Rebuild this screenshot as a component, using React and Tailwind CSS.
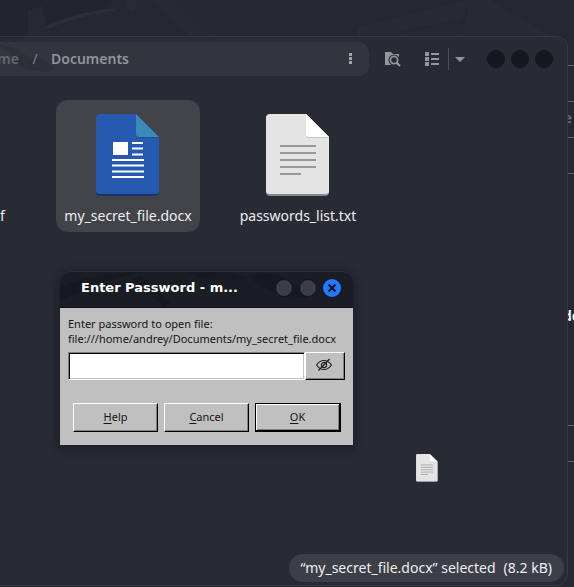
import React from 'react';

const Wallpaper = () => (
  <svg className="absolute inset-0 h-full w-full" viewBox="0 0 574 587" preserveAspectRatio="xMinYMin slice" aria-hidden="true">
    <path d="M0 0H112L106 8L60 20L44 26L36 36H0Z" fill="#23252e" />
    <path d="M28 10L42 6L48 36H28Z" fill="#282a33" />
    <path d="M46 26Q82 10 118 8L116 11Q80 15 47 29Z" fill="#2d2f38" />
    <path d="M126 0H137L134 12L124 8Z" fill="#2a2c35" />
    <path d="M150 0H180L216 36H190Z" fill="#272a34" />
    <path d="M358 28L470 0L462 18L380 36H358Z" fill="#282b35" />
    <path d="M395 36L463 18L462 36Z" fill="#262832" />
    <path d="M470 0H490L550 36H462Z" fill="#282a34" />
  </svg>
);

const DocxIcon = () => (
  <svg width="64" height="82" viewBox="0 0 64 82" aria-hidden="true">
    <path d="M4 1H41L63 23V78Q63 82 59 82H4Q0 82 0 78V4Q0 1 4 1Z" fill="#1b3566" />
    <path d="M4 0H40L63 23V77Q63 80 60 80H4Q0 80 0 77V4Q0 0 4 0Z" fill="#255ab0" />
    <path d="M40 1L63 24H43Q40 24 40 21Z" fill="#1f4d98" />
    <path d="M40 0L63 23H43Q40 23 40 20Z" fill="#3b8ab8" />
    <rect x="17" y="28" width="15" height="13" fill="#fff" />
    <path d="M36 29H47M36 34.5H47M36 40.5H47M16 46H48M16 51.5H48M16 57.5H48M16 63H48" stroke="#fff" strokeWidth="2" />
  </svg>
);

const TextIcon = ({ className }) => (
  <svg className={className} viewBox="0 0 64 82" aria-hidden="true">
    <path d="M4 1H41L63 23V78Q63 82 59 82H4Q0 82 0 78V4Q0 1 4 1Z" fill="#85878c" />
    <path d="M4 0H40L63 23V77Q63 80 60 80H4Q0 80 0 77V4Q0 0 4 0Z" fill="#e4e4e4" />
    <path d="M40 2L62 24H43Q40 24 40 21Z" fill="#c4c4c4" />
    <path d="M40 0L63 23H43Q40 23 40 20Z" fill="#fff" />
    <path d="M14 32H50M14 39H50M14 46H50M14 53H50M14 60H35" stroke="#999" strokeWidth="2" />
  </svg>
);

const FolderSearchIcon = () => (
  <svg width="16" height="16" viewBox="0 0 16 16" aria-hidden="true">
    <path d="M0 1H6L8 3H14V14H0Z" fill="#96979b" />
    <circle cx="9" cy="9" r="3.6" fill="#96979b" stroke="#282a34" strokeWidth="4" />
    <circle cx="9" cy="9" r="3.6" fill="#282a34" stroke="#96979b" strokeWidth="1.7" />
    <path d="M11.5 11.5L15 15" stroke="#96979b" strokeWidth="2.2" />
  </svg>
);

const ListIcon = () => (
  <svg width="14" height="14" viewBox="0 0 14 14" fill="#96979b" aria-hidden="true">
    <path d="M0 0H4V4H0ZM0 5H4V9H0ZM0 10H4V14H0ZM6 1H14V3H6ZM6 6H14V8H6ZM6 11H14V13H6Z" />
  </svg>
);

const EyeOffIcon = () => (
  <svg width="16" height="14" viewBox="0 0 16 14" fill="none" stroke="#222" aria-hidden="true">
    <path d="M0.5 7Q3.5 2.5 8 2.5T15.5 7Q12.5 11.5 8 11.5T0.5 7Z" strokeWidth="1.2" />
    <circle cx="8" cy="7" r="2.6" strokeWidth="1.2" />
    <path d="M2.5 12.5L13.5 1" strokeWidth="1.3" />
  </svg>
);

const FileTile = ({ name, selected, children }) => (
  <button
    className={`flex h-[132px] w-36 flex-col items-center rounded-xl pt-[14px] text-[14px] leading-5 text-[#eeeeef] ${selected ? 'bg-[#42444a]' : ''}`}
  >
    {children}
    <span className="mt-[10px]">{name}</span>
  </button>
);

const DialogButton = ({ hotkey, rest, primary }) => (
  <button
    className={`h-[29px] flex-1 text-[11px] ${
      primary
        ? 'border-r-2 border-b-2 border-t border-l border-black shadow-[inset_1px_1px_#fff,inset_-1px_-1px_#808080]'
        : 'border border-t-white border-l-white border-r-black border-b-black shadow-[inset_-1px_-1px_#808080]'
    }`}
  >
    <span className="underline underline-offset-2">{hotkey}</span>{rest}
  </button>
);

const PasswordDialog = () => (
  <div
    role="dialog"
    aria-labelledby="dialog-title"
    className="absolute top-[271px] left-[60px] w-[293px] rounded-t-xl shadow-[0_2px_10px_2px_rgba(0,0,0,0.28)]"
  >
    <header className="relative flex h-[37px] items-center overflow-hidden rounded-t-xl border-t border-b border-t-[#2c2f36] border-b-[#0d1015] bg-[#1a1d24] pr-3 pb-[3px] pl-[21px]">
      <svg className="absolute inset-0 h-full w-full" viewBox="0 0 293 37" preserveAspectRatio="none" aria-hidden="true">
        <path d="M0 16Q30 2 76 0L85 0Q40 8 0 32ZM72 8L80 3L110 32L104 37ZM128 0Q145 12 186 6L170 0ZM200 2Q220 0 236 14L252 20L248 28L220 24Q198 16 190 4Z" fill="#16191f" />
      </svg>
      <h2 id="dialog-title" className="relative flex-1 font-['DejaVu_Sans',sans-serif] text-[13px] leading-5 font-bold whitespace-nowrap text-white">
        Enter Password - m...
      </h2>
      <div className="relative flex gap-[6px]">
        <button aria-label="Minimize" className="size-[18px] rounded-full border border-[#11141a] bg-[#3c3e4d]" />
        <button aria-label="Maximize" className="size-[18px] rounded-full border border-[#11141a] bg-[#3c3e4d]" />
        <button aria-label="Close" className="flex size-[18px] items-center justify-center rounded-full bg-[#2777ff]">
          <svg width="8" height="8" viewBox="0 0 8 8" aria-hidden="true">
            <path d="M0.5 0.5L7.5 7.5M7.5 0.5L0.5 7.5" stroke="#101a33" strokeWidth="2.2" />
          </svg>
        </button>
      </div>
    </header>
    <form className="bg-[#c0c0c0] px-2 pt-2 pb-[13px] text-[#151515]" onSubmit={(e) => e.preventDefault()}>
      <label htmlFor="password" className="block text-[11px] leading-[15px] whitespace-nowrap">
        Enter password to open file:<br />
        file:///home/andrey/Documents/my_secret_file.docx
      </label>
      <div className="mt-[6px] flex">
        <input
          id="password"
          type="password"
          className="h-7 min-w-0 flex-1 border border-t-[#808080] border-l-[#808080] border-r-white border-b-white bg-white px-1 text-[11px] shadow-[inset_1px_1px_#000,inset_-1px_-1px_#c0c0c0] outline-none"
        />
        <button
          type="button"
          aria-label="Show password"
          className="flex h-7 w-10 items-center justify-center border border-t-white border-l-white border-r-black border-b-black pr-[2px] pb-[2px] shadow-[inset_-1px_-1px_#808080]"
        >
          <EyeOffIcon />
        </button>
      </div>
      <div className="mt-[23px] flex gap-[6px] pr-1 pl-[5px]">
        <DialogButton hotkey="H" rest="elp" />
        <DialogButton hotkey="C" rest="ancel" />
        <DialogButton hotkey="O" rest="K" primary />
      </div>
    </form>
  </div>
);

const FileManager = () => (
  <main className="flex min-w-0 flex-1 flex-col overflow-hidden rounded-r-xl border-t border-r border-b border-[#373944] bg-[#282a34]">
    <header className="flex items-center pt-[5px] pr-[14px]">
      <nav className="relative flex h-[34px] flex-1 items-center overflow-hidden rounded-r-[10px] bg-[#33353d] pr-[11px] pb-[2px] text-[14px] font-semibold text-[#929398]">
        <svg className="absolute top-0 left-0 h-full w-14" viewBox="0 0 56 34" aria-hidden="true">
          <path d="M0 3Q18 5 25 13L34 17L44 18L55 27L48 30L30 28L20 24L10 11L0 4Z" fill="#2e3038" />
        </svg>
        <a href="#home" className="relative flex w-[19px] justify-end text-[#65676e]">me</a>
        <span className="relative w-8 text-center font-normal text-[#7d7e84]">/</span>
        <a href="#documents" className="relative flex-1">Documents</a>
        <button aria-label="Menu" className="flex h-6 w-4 items-center justify-center">
          <svg width="3" height="11" viewBox="0 0 3 11" fill="#a3a4a8" aria-hidden="true">
            <path d="M0 0H3V3H0ZM0 4H3V7H0ZM0 8H3V11H0Z" />
          </svg>
        </button>
      </nav>
      <button aria-label="Search" className="ml-4"><FolderSearchIcon /></button>
      <button aria-label="List view" className="ml-6"><ListIcon /></button>
      <span className="ml-[9px] h-[22px] w-px bg-[#4b4d57]" />
      <button aria-label="View options" className="ml-[6px]">
        <svg width="10" height="5" viewBox="0 0 10 5" fill="#96979b" aria-hidden="true"><path d="M0 0H10L5 5Z" /></svg>
      </button>
      <div className="ml-[22px] flex gap-[6px]">
        <button aria-label="Minimize window" className="size-[18px] rounded-full bg-[#15171c]" />
        <button aria-label="Maximize window" className="size-[18px] rounded-full bg-[#15171c]" />
        <button aria-label="Close window" className="size-[18px] rounded-full bg-[#15171c]" />
      </div>
    </header>
    <div className="mt-6 flex flex-1">
      <span className="w-14 pt-[106px] text-[14px] leading-5 text-[#eeeeef]">f</span>
      <FileTile name="my_secret_file.docx" selected><DocxIcon /></FileTile>
      <span className="w-[26px]" />
      <FileTile name="passwords_list.txt"><TextIcon className="h-[82px] w-16" /></FileTile>
    </div>
    <footer className="mr-[3px] mb-[3px] flex h-7 items-center gap-2 self-end rounded-full bg-[#3d3f48] px-3 pb-px text-[14px] whitespace-nowrap text-[#eeeeef]">
      <span>“my_secret_file.docx” selected</span>
      <span>(8.2 kB)</span>
    </footer>
  </main>
);

// slice of the window that sits behind the file manager
const BackWindow = () => (
  <aside className="flex w-[6px] flex-col overflow-hidden pt-[29px] font-semibold">
    <div className="h-9 border-t border-[#5d606d]" />
    <div className="flex h-9 items-center justify-end border-t border-[#5d606d] pb-1 text-[14px] text-[#6a7082]">
      <span className="pr-[2px]">e</span>
    </div>
    <div className="h-9 border-t border-[#5d606d]" />
    <div className="h-[252px] border-t border-[#5d606d] pt-[132px] text-[14px] leading-5 text-white">
      <span className="-ml-[5px]">de</span>
    </div>
    <div className="h-[37px] border-y border-[#5d606d]" />
  </aside>
);

const App = () => (
  <div className="relative flex h-screen flex-col overflow-hidden bg-[#252832] pt-9 pb-[1px] font-['Noto_Sans',sans-serif]">
    <Wallpaper />
    <div className="relative flex min-h-0 flex-1">
      <FileManager />
      <BackWindow />
    </div>
    <TextIcon className="absolute top-[454px] left-[416px] h-7 w-[22px]" />
    <PasswordDialog />
  </div>
);

export default App;
